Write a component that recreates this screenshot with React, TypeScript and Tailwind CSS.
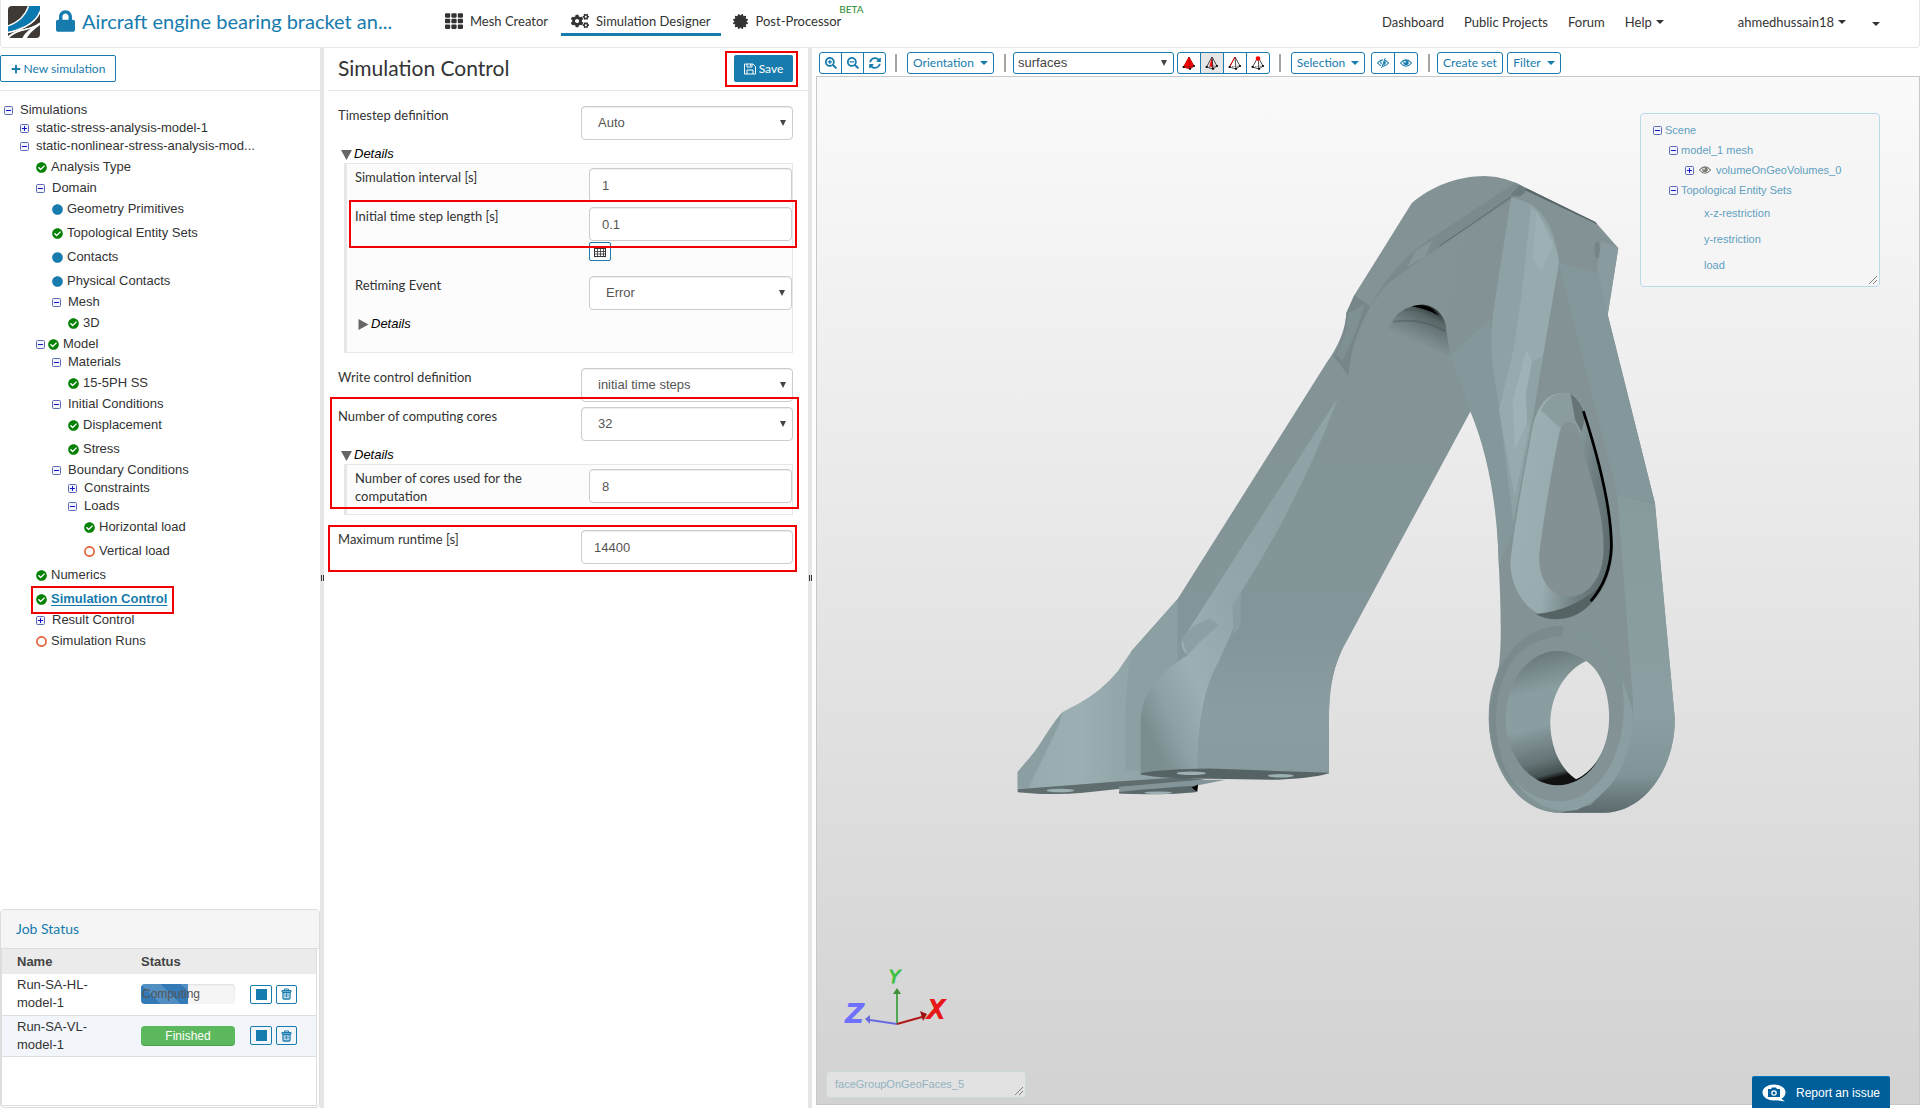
import { useState } from 'react';
import type { ReactNode } from 'react';
import { FaLock, FaTh, FaCogs, FaCertificate, FaPlus, FaSearchPlus, FaSearchMinus, FaSyncAlt, FaCheckCircle, FaCircle } from 'react-icons/fa';
import { clsx } from 'clsx';

type Status = 'done' | 'info' | 'todo';

interface TreeItem {
  label: string;
  level: number;
  toggle?: 'open' | 'closed';
  status?: Status;
  active?: boolean;
}

const treeItems: TreeItem[] = [
  { label: 'Simulations', level: 0, toggle: 'open' },
  { label: 'static-stress-analysis-model-1', level: 1, toggle: 'closed' },
  { label: 'static-nonlinear-stress-analysis-mod...', level: 1, toggle: 'open' },
  { label: 'Analysis Type', level: 2, status: 'done' },
  { label: 'Domain', level: 2, toggle: 'open' },
  { label: 'Geometry Primitives', level: 3, status: 'info' },
  { label: 'Topological Entity Sets', level: 3, status: 'done' },
  { label: 'Contacts', level: 3, status: 'info' },
  { label: 'Physical Contacts', level: 3, status: 'info' },
  { label: 'Mesh', level: 3, toggle: 'open' },
  { label: '3D', level: 4, status: 'done' },
  { label: 'Model', level: 2, toggle: 'open', status: 'done' },
  { label: 'Materials', level: 3, toggle: 'open' },
  { label: '15-5PH SS', level: 4, status: 'done' },
  { label: 'Initial Conditions', level: 3, toggle: 'open' },
  { label: 'Displacement', level: 4, status: 'done' },
  { label: 'Stress', level: 4, status: 'done' },
  { label: 'Boundary Conditions', level: 3, toggle: 'open' },
  { label: 'Constraints', level: 4, toggle: 'closed' },
  { label: 'Loads', level: 4, toggle: 'open' },
  { label: 'Horizontal load', level: 5, status: 'done' },
  { label: 'Vertical load', level: 5, status: 'todo' },
  { label: 'Numerics', level: 2, status: 'done' },
  { label: 'Simulation Control', level: 2, status: 'done', active: true },
  { label: 'Result Control', level: 2, toggle: 'closed' },
  { label: 'Simulation Runs', level: 2, status: 'todo' },
];

const indents = ['pl-1', 'pl-5', 'pl-9', 'pl-[52px]', 'pl-[68px]', 'pl-[84px]'];

/* ---------- small icons ---------- */

function Caret({ className }: { className?: string }) {
  return (
    <svg viewBox="0 0 8 4" className={clsx('inline-block h-1 w-2 shrink-0', className)} fill="currentColor">
      <path d="M0 0h8L4 4z" />
    </svg>
  );
}

function ToggleIcon({ open }: { open: boolean }) {
  return (
    <svg viewBox="0 0 9 9" className="block h-[9px] w-[9px] shrink-0">
      <rect x="0.5" y="0.5" width="8" height="8" rx="1" fill="#f2f3fb" stroke="#5c6bb5" />
      <path d={open ? 'M2 4.5h5' : 'M2 4.5h5M4.5 2v5'} stroke="#1414c8" />
    </svg>
  );
}

function StatusIcon({ status }: { status: Status }) {
  if (status === 'done') return <FaCheckCircle className="h-[11px] w-[11px] shrink-0 text-[#058205]" />;
  if (status === 'info') return <FaCircle className="h-[11px] w-[11px] shrink-0 text-[#177bae]" />;
  return (
    <svg viewBox="0 0 11 11" className="h-[11px] w-[11px] shrink-0">
      <circle cx="5.5" cy="5.5" r="4.6" fill="none" stroke="#e2592b" strokeWidth="1.6" />
    </svg>
  );
}

function Logo() {
  return (
    <svg viewBox="0 0 32 32" className="h-8 w-8 shrink-0">
      <path d="M4 0h25Q28 7 16 15Q6 20 0 22V4Q0 0 4 0z" fill="#3e3935" />
      <path d="M20 0h12v4Q29 14 17 20Q8 24 0 26V20Q16 14 20 0z" fill="#0b78b0" />
      <path d="M32 7v10Q26 21 16 23Q6 25 0 30V27Q8 25 17 21Q28 16 32 7z" fill="#3e3935" />
      <path d="M32 19v9q0 4-4 4h-9Q22 26 32 19zM28 20Q18 26 15 32H4q-3 0-3-1Q8 26 16 24Q22 23 28 20z" fill="#3e3935" />
      <path d="M0 20Q16 14 20.500 0M0 26.500Q10 25 18 20.500Q29 14 32 6M1 31Q8 25 17 23.500Q26 21.500 32 17M15 32Q19 24 32 18" fill="none" stroke="#fff" strokeWidth="1.300" />
    </svg>
  );
}

function SaveIcon() {
  return (
    <svg viewBox="0 0 12 12" className="h-3 w-3 shrink-0" fill="none" stroke="currentColor">
      <path d="M1.500 1h7.500l2.500 2.500v7.500h-11v-10z" />
      <path d="M3 1v3h5V1M3 11V7h6v4" />
      <path d="M6.500 1v2" />
    </svg>
  );
}

function TableIcon() {
  return (
    <svg viewBox="0 0 12 10" className="h-[10px] w-3" fill="none" stroke="#333">
      <rect x="0.500" y="0.500" width="11" height="9" />
      <path d="M0 1h12" strokeWidth="2" />
      <path d="M3.500 1v9M6.500 1v9M9.500 1v9M1 4.500h10M1 7h10" strokeWidth="0.800" />
    </svg>
  );
}

function TrashIcon() {
  return (
    <svg viewBox="0 0 11 12" className="h-3 w-[11px]">
      <path d="M1 2.500h9v1.500H1zM3.500 2.500V1h4v1.500" fill="none" stroke="#177bae" />
      <path d="M2 4.500h7V10q0 1-1 1H3q-1 0-1-1z" fill="none" stroke="#177bae" strokeWidth="1.300" />
      <path d="M4 5.500v4M5.500 5.500v4M7 5.500v4" stroke="#177bae" strokeWidth="0.900" />
    </svg>
  );
}

function EyeIcon({ off, className }: { off?: boolean; className?: string }) {
  return (
    <svg viewBox="0 0 12 10" className={clsx('h-[10px] w-3 shrink-0', className)}>
      <path d="M0.500 5Q6-1.500 11.500 5Q6 11.500 0.500 5z" fill="none" stroke="currentColor" strokeWidth="1.100" />
      <circle cx="6" cy="4.600" r="2.700" fill="currentColor" />
      <circle cx="5" cy="3.800" r="0.900" fill="#fff" />
      {off && <path d="M7.600 0L4 10" stroke="#fff" strokeWidth="2" />}
      {off && <path d="M8.200 0L4.600 10" stroke="currentColor" strokeWidth="1" />}
    </svg>
  );
}

// Tetrahedron with the picked entity kind painted red
function PickIcon({ kind }: { kind: 'volume' | 'face' | 'edge' | 'node' }) {
  return (
    <svg viewBox="0 0 14 14" className="h-[14px] w-[14px]">
      {kind === 'volume' && <path d="M7 1L1.500 11 8 13l4-3z" fill="#f00" />}
      {kind === 'face' && <path d="M7 1L4.500 9.500 8.500 12.500z" fill="#f00" />}
      <path
        d="M7 1L1.500 11 8 13l4-3zM7 1l1 12"
        fill="none"
        stroke={kind === 'volume' ? '#b00' : '#333'}
        strokeWidth="0.900"
      />
      <path d="M1.500 11L12 10" stroke="#333" strokeWidth="0.700" strokeDasharray="1.500 1" />
      {kind === 'edge' && <path d="M7 1L1.500 11" stroke="#f00" strokeWidth="1" />}
      {kind === 'node' && <circle cx="7" cy="2.500" r="2.300" fill="#f00" />}
      <circle cx="1.600" cy="11" r="1.100" />
      <circle cx="8" cy="12.800" r="1.100" />
      <circle cx="12" cy="10" r="1.100" />
    </svg>
  );
}

function Grip() {
  return (
    <svg viewBox="0 0 8 8" className="absolute right-0.5 bottom-0.5 h-2 w-2">
      <path d="M0 8L8 0M4 8l4-4" stroke="#777" strokeWidth="0.900" />
    </svg>
  );
}

// Red frame drawn over the thing that it marks
function Marker({ className }: { className: string }) {
  return <span className={clsx('pointer-events-none absolute z-10 border-2 border-[#f00000]', className)} />;
}

function Splitter() {
  return (
    <div className="flex w-1 shrink-0 items-center justify-center gap-px bg-[#e5e5e5]">
      <span className="h-1.5 w-px bg-[#333]" />
      <span className="h-1.5 w-px bg-[#333]" />
    </div>
  );
}

/* ---------- header ---------- */

function Header() {
  return (
    <header className="flex h-12 shrink-0 items-start rounded-b border-x border-b border-[#e7e7e7] bg-white text-[13px] leading-5 text-[#333]">
      <a href="#" className="mt-1.5 ml-[7px]" aria-label="Home">
        <Logo />
      </a>
      <div className="flex w-[405px] items-center pt-1.5 pl-4 text-[#177bae]">
        <FaLock className="h-[22px] w-[19px]" />
        <h1 className="ml-[7px] text-[20px] leading-[30px]">Aircraft engine bearing bracket an...</h1>
      </div>
      <nav className="flex h-9">
        <a href="#" className="flex items-center pt-1.5 pr-[13px]">
          <FaTh className="mr-[7px] h-[18px] w-[18px]" />
          Mesh Creator
        </a>
        <a href="#" className="flex items-center border-b-[3px] border-[#177bae] px-2.5 pt-[9px]">
          <FaCogs className="mr-[7px] h-[18px] w-[18px]" />
          Simulation Designer
        </a>
        <a href="#" className="flex items-center pt-1.5 pl-3">
          <FaCertificate className="mr-2 h-[15px] w-[15px]" />
          Post-Processor
        </a>
        <sup className="top-0 -ml-0.5 pt-[3px] text-[10px] leading-3 text-[#1f8a2c]">BETA</sup>
      </nav>
      <nav className="ml-auto flex pt-3 pr-[39px]">
        <a href="#" className="mr-5">Dashboard</a>
        <a href="#" className="mr-5">Public Projects</a>
        <a href="#" className="mr-5">Forum</a>
        <button className="mr-[74px] flex items-center gap-1">
          Help <Caret />
        </button>
        <button className="mr-[26px] flex items-center gap-1">
          ahmedhussain18 <Caret />
        </button>
        <button aria-label="More">
          <Caret />
        </button>
      </nav>
    </header>
  );
}

/* ---------- left column ---------- */

function TreeRow({ item }: { item: TreeItem }) {
  return (
    <li className={clsx('flex items-center', indents[item.level], item.toggle ? 'h-[18px]' : 'h-6')}>
      <span className="relative flex items-center">
        {item.toggle && <ToggleIcon open={item.toggle === 'open'} />}
        {item.status && (
          <span className={item.toggle ? 'ml-[3px]' : ''}>
            <StatusIcon status={item.status} />
          </span>
        )}
        <a
          href="#"
          className={clsx(
            item.status ? 'pl-1' : 'pl-[7px]',
            item.active ? 'font-bold text-[#177bae] underline underline-offset-2' : 'text-[#333]',
          )}
        >
          {item.label}
        </a>
        {item.active && <Marker className="-top-[3px] -right-[7px] -bottom-[5px] -left-[5px]" />}
      </span>
    </li>
  );
}

function JobButtons({ name }: { name: string }) {
  return (
    <div className="flex gap-1">
      <button aria-label={`Stop ${name}`} className="flex h-[19px] w-[22px] items-center justify-center rounded-xs border border-[#177bae]">
        <span className="h-[11px] w-[11px] bg-[#177bae]" />
      </button>
      <button aria-label={`Delete ${name}`} className="flex h-[19px] w-[21px] items-center justify-center rounded-xs border border-[#177bae]">
        <TrashIcon />
      </button>
    </div>
  );
}

function JobStatus() {
  return (
    <section className="h-[199px] shrink-0 overflow-hidden rounded border border-[#ddd] bg-white">
      <h2 className="flex h-[39px] items-center border-b border-[#ddd] bg-[#f5f5f5] pb-0.5 pl-[15px] font-[Lato,sans-serif] text-[14px] text-[#177bae]">
        Job Status
      </h2>
      <div className="mr-0.5 h-[157px] border-x border-b border-[#ddd]">
        <table className="w-full table-fixed text-left leading-[18px]">
          <thead>
            <tr className="h-[25px] bg-[#ebebeb] text-[#444]">
              <th className="w-[139px] pl-[15px]">Name</th>
              <th className="w-[109px]">Status</th>
              <th aria-label="Actions" />
            </tr>
          </thead>
          <tbody className="text-[#333]">
            <tr className="h-[41px] border-b border-[#ddd]">
              <td className="pr-12 pl-[15px]">Run-SA-HL-model-1</td>
              <td>
                <div className="h-5 w-[94px] overflow-hidden rounded bg-[#f5f5f5] shadow-[inset_0_1px_2px_rgba(0,0,0,0.1)]">
                  <div className="h-5 w-[47px] bg-[#337ab7] bg-[linear-gradient(45deg,rgba(255,255,255,.15)_25%,transparent_25%,transparent_50%,rgba(255,255,255,.15)_50%,rgba(255,255,255,.15)_75%,transparent_75%)] bg-[length:40px_40px] pl-px text-[12px] leading-5 whitespace-nowrap text-[#555]">
                    Computing
                  </div>
                </div>
              </td>
              <td>
                <JobButtons name="Run-SA-HL-model-1" />
              </td>
            </tr>
            <tr className="h-[41px] border-b border-[#ddd] bg-[#f2f6fb]">
              <td className="pr-12 pl-[15px]">Run-SA-VL-model-1</td>
              <td>
                <div className="h-5 w-[94px] rounded bg-[#5cb85c] text-center text-[12px] leading-5 text-white shadow-[inset_0_-1px_0_rgba(0,0,0,0.15)]">
                  Finished
                </div>
              </td>
              <td>
                <JobButtons name="Run-SA-VL-model-1" />
              </td>
            </tr>
          </tbody>
        </table>
      </div>
    </section>
  );
}

function Sidebar() {
  return (
    <aside className="flex w-80 shrink-0 flex-col font-['Liberation_Sans',Arial,sans-serif] text-[13px]">
      <div className="h-[43px] shrink-0 border-b border-[#e7e7e7] pt-[7px]">
        <button className="flex h-[27px] w-[116px] items-center justify-center gap-[3px] rounded-xs border border-[#177bae] font-[Lato,sans-serif] text-[12px] text-[#177bae]">
          <FaPlus className="h-[10px] w-[10px]" />
          New simulation
        </button>
      </div>
      <ul className="min-h-0 flex-1 overflow-hidden pt-[10px]">
        {treeItems.map((item) => (
          <TreeRow key={item.label} item={item} />
        ))}
      </ul>
      <JobStatus />
    </aside>
  );
}

/* ---------- settings form ---------- */

interface FieldProps {
  id: string;
  label: string;
  value: string;
  kind?: 'text' | 'select';
  nested?: boolean;
}

function Field({ id, label, value, kind = 'text', nested }: FieldProps) {
  const control = 'h-[34px] w-full rounded border border-[#ccc] bg-white text-[13px] text-[#555] shadow-[inset_0_1px_1px_rgba(0,0,0,0.075)]';
  return (
    <div className="flex items-start justify-between">
      <label htmlFor={id} className="flex-1 pr-14 leading-[18px]">
        {label}
      </label>
      <div className={clsx("relative shrink-0 font-['Liberation_Sans',Arial,sans-serif]", nested ? 'w-[203px]' : 'w-[212px]')}>
        {kind === 'select' ? (
          <>
            <select id={id} defaultValue={value} className={clsx(control, 'appearance-none px-4')}>
              <option>{value}</option>
            </select>
            <svg viewBox="0 0 6 6" className="pointer-events-none absolute top-[14px] right-[7px] h-1.5 w-1.5" fill="#444">
              <path d="M0 0h6L3 6z" />
            </svg>
          </>
        ) : (
          <input id={id} type="text" defaultValue={value} className={clsx(control, 'px-3')} />
        )}
      </div>
    </div>
  );
}

function Details({ children, initial = true }: { children?: ReactNode; initial?: boolean }) {
  const [open, setOpen] = useState(initial);
  return (
    <div>
      <button
        type="button"
        aria-expanded={open}
        onClick={() => setOpen(!open)}
        className="flex h-[18px] items-center gap-0.5 pl-[3px] font-['Liberation_Sans',Arial,sans-serif] text-[13px] text-black italic"
      >
        <svg viewBox="0 0 11 11" className="h-[11px] w-[11px]" fill="#666">
          <path d={open ? 'M0 1h11L5.500 11z' : 'M0.500 0v11L10.500 5.500z'} />
        </svg>
        Details
      </button>
      {open && (
        <div className="ml-1.5 border border-l-[3px] border-[#e7e7e7] bg-[#fcfcfc] pt-1 pl-2">
          {children}
        </div>
      )}
    </div>
  );
}

function SettingsPanel() {
  return (
    <main className="w-[484px] shrink-0 overflow-hidden pl-1 text-[13px] text-[#333]">
      <div className="flex h-[43px] items-start justify-between border-b border-[#e7e7e7] pt-[7px] pr-[15px] pl-2.5">
        <h2 className="text-[21px] leading-[26px]">Simulation Control</h2>
        <div className="relative">
          <button className="flex h-[27px] w-[59px] items-center justify-center gap-[3px] rounded-xs bg-[#177bae] text-[12px] text-white">
            <SaveIcon />
            Save
          </button>
          <Marker className="-top-1 -right-[5px] -bottom-[5px] -left-[9px]" />
        </div>
      </div>
      <form className="flex flex-col gap-[5px] pt-[15px] pr-[15px] pl-2.5">
        <Field id="timestep" label="Timestep definition" value="Auto" kind="select" />
        <Details>
          <Field id="interval" label="Simulation interval [s]" value="1" nested />
          <div className="relative pt-[5px]">
            <Field id="step-length" label="Initial time step length [s]" value="0.1" nested />
            <Marker className="-top-0.5 -right-[5px] -bottom-[7px] -left-1.5" />
          </div>
          <div className="flex w-full justify-end pt-px pb-[15px]">
            <div className="w-[203px]">
              <button type="button" aria-label="Edit as table" className="flex h-[19px] w-[22px] items-center justify-center rounded-xs border border-[#177bae]">
                <TableIcon />
              </button>
            </div>
          </div>
          <Field id="retiming" label="Retiming Event" value="Error" kind="select" nested />
          <div className="pt-[5px] pb-[19px]">
            <Details initial={false} />
          </div>
        </Details>
        <div className="pt-[10px]">
          <Field id="write-control" label="Write control definition" value="initial time steps" kind="select" />
        </div>
        <div className="relative flex flex-col gap-[5px]">
          <Field id="cores" label="Number of computing cores" value="32" kind="select" />
          <Details>
            <div className="pb-[9px]">
              <Field id="used-cores" label="Number of cores used for the computation" value="8" nested />
            </div>
          </Details>
          <Marker className="-top-[10px] -right-1.5 bottom-1.5 -left-2" />
        </div>
        <div className="relative mt-[10px]">
          <Field id="runtime" label="Maximum runtime [s]" value="14400" />
          <Marker className="-top-[5px] -right-1 -bottom-2 -left-2.5" />
        </div>
      </form>
    </main>
  );
}

/* ---------- viewer ---------- */

const toolButton = 'flex h-[22px] items-center justify-center rounded-[3px] border border-[#177bae] bg-white text-[12px] text-[#177bae]';

function Divider({ className }: { className: string }) {
  return <span className={clsx('h-[18px] w-0.5 bg-[#aaa5a0]', className)} />;
}

function Toolbar() {
  return (
    <div className="flex h-7 shrink-0 items-center pt-0.5 pl-[3px]">
      <div className="flex -space-x-px">
        <button aria-label="Zoom in" className={clsx(toolButton, 'w-[23px] rounded-r-none')}>
          <FaSearchPlus className="h-3 w-3" />
        </button>
        <button aria-label="Zoom out" className={clsx(toolButton, 'w-[23px] rounded-none')}>
          <FaSearchMinus className="h-3 w-3" />
        </button>
        <button aria-label="Reset view" className={clsx(toolButton, 'w-[23px] rounded-l-none')}>
          <FaSyncAlt className="h-3 w-3" />
        </button>
      </div>
      <Divider className="mr-[10px] ml-[9px]" />
      <button className={clsx(toolButton, 'w-[87px] gap-1.5')}>
        Orientation <Caret />
      </button>
      <Divider className="mr-[7px] ml-[10px]" />
      <div className="relative mr-[3px] w-[161px]">
        <select
          aria-label="Render mode"
          defaultValue="surfaces"
          className="block h-[22px] w-full appearance-none rounded-[3px] border border-[#177bae] bg-white px-1 font-['Liberation_Sans',Arial,sans-serif] text-[13px] text-[#444]"
        >
          <option>surfaces</option>
        </select>
        <svg viewBox="0 0 6 6" className="pointer-events-none absolute top-2 right-[7px] h-1.5 w-1.5" fill="#444">
          <path d="M0 0h6L3 6z" />
        </svg>
      </div>
      <div className="flex -space-x-px">
        <button aria-label="Pick volumes" className={clsx(toolButton, 'w-6 rounded-r-none')}>
          <PickIcon kind="volume" />
        </button>
        <button aria-label="Pick faces" className={clsx(toolButton, 'w-6 rounded-none !bg-[#e6e6e6]')}>
          <PickIcon kind="face" />
        </button>
        <button aria-label="Pick edges" className={clsx(toolButton, 'w-6 rounded-none')}>
          <PickIcon kind="edge" />
        </button>
        <button aria-label="Pick nodes" className={clsx(toolButton, 'w-6 rounded-l-none')}>
          <PickIcon kind="node" />
        </button>
      </div>
      <Divider className="mr-[10px] ml-[9px]" />
      <button className={clsx(toolButton, 'mr-1.5 w-[74px] gap-1.5')}>
        Selection <Caret />
      </button>
      <div className="flex -space-x-px">
        <button aria-label="Hide selection" className={clsx(toolButton, 'w-6 rounded-r-none')}>
          <EyeIcon off />
        </button>
        <button aria-label="Show all" className={clsx(toolButton, 'w-6 rounded-l-none')}>
          <EyeIcon />
        </button>
      </div>
      <Divider className="mr-[7px] ml-[10px]" />
      <button className={clsx(toolButton, 'mr-1 w-[66px]')}>Create set</button>
      <button className={clsx(toolButton, 'w-[54px] gap-1.5')}>
        Filter <Caret />
      </button>
    </div>
  );
}

function Bracket() {
  return (
    <g transform="translate(163 73) scale(0.4592 0.4337)">
      <defs>
        <mask id="bore">
          <rect width="1568" height="1568" fill="#fff" />
          <path d="M1320 1178C1356 1205 1370 1255 1370 1310C1370 1375 1340 1430 1298 1451C1262 1425 1241 1375 1242 1315C1244 1255 1275 1200 1320 1178z" fill="#000" />
        </mask>
        <linearGradient id="foot" gradientUnits="userSpaceOnUse" x1="350" x2="780" y1="1300" y2="1120">
          <stop offset="0" stopColor="#7c8d90" />
          <stop offset="0.120" stopColor="#8da0a3" />
          <stop offset="0.300" stopColor="#9cb0b3" />
          <stop offset="0.600" stopColor="#93a7aa" />
          <stop offset="1" stopColor="#8fa3a6" />
        </linearGradient>
        <linearGradient id="backFoot" x1="0" x2="1" y1="0" y2="0">
          <stop offset="0" stopColor="#96aaad" />
          <stop offset="0.300" stopColor="#9cb0b4" />
          <stop offset="0.500" stopColor="#93a6a9" />
          <stop offset="1" stopColor="#8a9c9f" />
        </linearGradient>
        <linearGradient id="arm" x1="0" x2="0" y1="0" y2="1">
          <stop offset="0" stopColor="#839295" />
          <stop offset="0.740" stopColor="#839598" />
          <stop offset="1" stopColor="#8b9ea1" />
        </linearGradient>
        <linearGradient id="frontFoot" x1="0" x2="0" y1="0" y2="1">
          <stop offset="0" stopColor="#839598" />
          <stop offset="0.250" stopColor="#87999c" />
          <stop offset="0.600" stopColor="#8b9da0" />
          <stop offset="1" stopColor="#879a9d" />
        </linearGradient>
        <linearGradient id="boreWall" x1="0" x2="0.200" y1="0" y2="1">
          <stop offset="0" stopColor="#465254" />
          <stop offset="0.100" stopColor="#6c7c7e" />
          <stop offset="0.350" stopColor="#8a9da0" />
          <stop offset="0.600" stopColor="#8a9da0" />
          <stop offset="0.850" stopColor="#667577" />
          <stop offset="0.960" stopColor="#465254" />
          <stop offset="1" stopColor="#111" />
        </linearGradient>
        <linearGradient id="side" x1="0" x2="0" y1="0" y2="1">
          <stop offset="0" stopColor="#879a9c" />
          <stop offset="0.700" stopColor="#8b9ea1" />
          <stop offset="0.880" stopColor="#819497" />
          <stop offset="1" stopColor="#5c6a6c" />
        </linearGradient>
        <linearGradient id="archWall" gradientUnits="userSpaceOnUse" x1="985" x2="935" y1="356" y2="460">
          <stop offset="0" stopColor="#1b2021" />
          <stop offset="0.250" stopColor="#586567" />
          <stop offset="0.550" stopColor="#718083" />
          <stop offset="0.850" stopColor="#849598" />
          <stop offset="1" stopColor="#849598" />
        </linearGradient>
        <linearGradient id="pocket" x1="0" x2="1" y1="0.300" y2="0.600">
          <stop offset="0" stopColor="#9db1b5" />
          <stop offset="0.450" stopColor="#98abae" />
          <stop offset="0.750" stopColor="#708082" />
          <stop offset="1" stopColor="#5d6b6d" />
        </linearGradient>
      </defs>

      {/* rear foot */}
      <path d="M82 1434L98 1414C130 1380 150 1330 180 1296L215 1276Q262 1250 300 1202L330 1155L430 1036L520 1100V1440L300 1472L82 1478z" fill="url(#backFoot)" />
      <path d="M82 1434L98 1414C130 1380 150 1330 180 1296L172 1325L105 1472H82z" fill="#8b9ea1" />
      <path d="M330 1155L430 1036V1200L350 1300V1430H318Q312 1250 330 1155z" fill="#8c9fa2" />
      <path d="M82 1474L300 1456L440 1446L490 1452L240 1480Q190 1486 130 1485L82 1481z" fill="#5f6d6f" />
      <path d="M303 1468L480 1452H535L470 1466V1481Q400 1488 303 1483z" fill="#839598" />
      <path d="M303 1480Q400 1470 470 1466V1480Q400 1488 303 1484z" fill="#5a686a" />
      <path d="M461 1470L475 1463L473 1480z" fill="#000" />

      {/* left arm */}
      <path d="M430 1036L755 490Q795 430 798 375L815 335L940 123C980 85 1040 60 1100 60Q1150 62 1190 88L1340 166L1240 640L1068 603L800 1130C768 1190 760 1240 760 1310V1438H350V1310C358 1250 400 1205 430 1180z" fill="url(#arm)" />
      <path d="M815 335L798 375Q796 430 770 475L802 520Q808 440 850 360Z" fill="#778789" />
      <path d="M802 375Q798 430 775 472L790 485Q818 430 838 355z" fill="#7f9092" />
      <path d="M1165 76L980 205Q900 260 850 360L872 328Q890 300 1000 225L1160 112L1190 88z" fill="#7b8a8d" />
      <path d="M1157 108L1000 222" stroke="#5a6769" strokeWidth="2" />
      <path d="M985 208L970 246L930 270L950 232z" fill="#86979a" />
      <path d="M440 1130L780 570Q700 800 568 1020C560 1100 540 1130 520 1180Q475 1260 473 1427L350 1437V1310C356 1240 400 1200 452 1165Q436 1150 440 1130z" fill="url(#foot)" />
      <path d="M568 1020L568 1095L552 1120L550 1050z" fill="#8a9da0" />
      <path d="M440 1130L452 1165Q480 1130 520 1095L500 1080Q450 1100 440 1130z" fill="#8c9fa2" />
      <path d="M556 1115Q640 1140 785 1160Q760 1220 760 1310V1436L473 1427Q475 1260 520 1180z" fill="url(#frontFoot)" />
      <path d="M350 1437Q400 1427 500 1426L760 1436Q740 1447 650 1452L500 1450Q400 1450 350 1440z" fill="#556365" />
      <g fill="#9db1b4">
        <ellipse cx="460" cy="1437" rx="32" ry="4" />
        <ellipse cx="655" cy="1443" rx="28" ry="4" />
        <ellipse cx="175" cy="1477" rx="30" ry="4" />
        <ellipse cx="388" cy="1482" rx="30" ry="3" />
      </g>

      {/* arch */}
      <path d="M884 422Q905 360 962 356C995 358 1010 385 1014 402L1024 475z" fill="url(#archWall)" />
      <path d="M940 361Q962 352 985 366L1000 382Q965 363 940 361z" fill="#000" />
      <path d="M925 368Q970 366 1008 392M900 396Q960 385 1014 418" fill="none" stroke="#4c585a" strokeOpacity="0.5" strokeWidth="4" />

      {/* right leg */}
      <g mask="url(#bore)">
        <path d="M1190 88L1340 166L1390 226L1367 380L1470 815L1513 1310C1515 1420 1450 1527 1360 1528H1262C1170 1528 1108 1420 1108 1310C1108 1250 1120 1230 1130 1190C1138 1130 1132 1000 1130 960C1125 800 1115 700 1068 603L1024 475L1014 402L1060 200z" fill="#839295" />
        <path d="M1388 795L1470 818L1513 1310C1515 1420 1450 1527 1360 1528H1262C1370 1500 1422 1400 1422 1270z" fill="url(#side)" />
        <path d="M1260 260L1345 285L1367 380L1470 815L1388 795z" fill="#84979a" />
        <path d="M1352 210L1390 226L1367 380L1343 275z" fill="#899b9e" />
        <path d="M1190 88L1340 166L1345 172L1186 92z" fill="#5a686a" />
        <ellipse cx="1344" cy="230" rx="6" ry="20" fill="#75858a" />
        <path d="M1155 104Q1180 115 1190 90L1175 80z" fill="#6c7b7e" />
        <path d="M1024 475L1110 390L1130 575L1165 870L1130 960Q1125 750 1068 603z" fill="#84979a" />
        <path d="M1157 108L1200 125Q1250 160 1261 258L1225 480L1205 610L1162 860L1128 575Q1105 450 1118 370z" fill="#8ea1a4" />
        <path d="M1200 130Q1245 175 1261 258L1225 480L1200 620L1165 800L1130 600L1162 460L1180 330z" fill="#97abae" />
        <path d="M1190 460L1202 490L1188 560L1192 630L1165 690L1160 580z" fill="#9fb2b5" />
        <path d="M1202 490L1225 475L1205 610L1192 640L1190 560z" fill="#8fa2a5" />
        <path d="M1212 140L1248 220L1222 280L1204 250z" fill="#9db1b4" />

        {/* pocket */}
        <path d="M1270 560C1300 560 1315 590 1318 610C1340 700 1378 830 1378 915C1378 1010 1320 1082 1255 1082C1190 1075 1155 1010 1155 950C1165 850 1190 720 1203 640Q1220 560 1270 560z" fill="url(#pocket)" />
        <path d="M1270 560C1300 560 1315 590 1318 610L1310 650L1262 640L1222 600Q1240 562 1270 560z" fill="#8b9c9f" />
        <path d="M1286 562Q1312 580 1318 615L1310 650L1296 622z" fill="#667476" />
        <path d="M1210 1070Q1300 1060 1355 1000Q1325 1080 1255 1082Q1230 1082 1210 1070z" fill="#566365" />
        <path d="M1314 602C1350 720 1375 830 1375 915Q1372 990 1330 1040" fill="none" stroke="#000" strokeWidth="6" />
        <path d="M1282 628C1300 630 1303 640 1310 680C1330 760 1358 830 1358 920C1358 990 1320 1032 1280 1030C1240 1025 1215 990 1218 930C1230 830 1245 740 1262 650Q1268 628 1282 628z" fill="#839194" />

        {/* eye */}
        <path d="M1135 1190Q1180 1095 1280 1095Q1400 1110 1421 1280Q1425 1420 1330 1510L1262 1528C1170 1528 1108 1420 1108 1310Q1108 1250 1135 1190z" fill="#829396" />
        <path d="M1110 1330Q1108 1250 1135 1190Q1180 1100 1270 1096L1268 1122Q1125 1130 1124 1320Q1130 1450 1200 1500Q1118 1440 1110 1330z" fill="#7b8b8d" />
        <path d="M1398 1220Q1420 1400 1320 1480Q1230 1530 1165 1455Q1220 1535 1300 1522Q1425 1460 1421 1290z" fill="#8b9ea1" />
        <ellipse cx="1260" cy="1312" rx="136" ry="190" fill="#839295" />
        <ellipse cx="1258" cy="1310" rx="113" ry="155" fill="url(#boreWall)" />
        <path d="M1371 1310Q1370 1210 1320 1178L1298 1451Q1370 1410 1371 1310z" fill="#839295" />
      </g>
    </g>
  );
}

function AxisTriad() {
  return (
    <g fontFamily="DejaVu Sans, sans-serif" fontStyle="italic">
      <path d="M80 947V915" stroke="#4fa84f" strokeWidth="2" />
      <path d="M76 917L80 911L84 917z" fill="#3e8f3e" />
      <path d="M80 947L53 943" stroke="#6a6ae0" strokeWidth="2" />
      <path d="M48 942L53 938V947z" fill="#6a6ae0" />
      <path d="M80 947L105 940" stroke="#b01818" strokeWidth="2" />
      <path d="M110 937L103 934L106 944z" fill="#a01010" />
      <text x="72" y="906" fontSize="18" fill="#3fbf3f" stroke="#3fbf3f">Y</text>
      <text x="29" y="945" fontSize="25" fill="#7070ff" stroke="#7070ff" strokeWidth="2">Z</text>
      <text x="111" y="941" fontSize="24" fill="#e81818" stroke="#e81818" strokeWidth="2">X</text>
    </g>
  );
}

function SceneTree() {
  return (
    <div className="absolute top-9 right-[39px] h-[174px] w-60 rounded border border-[#b9dbe8] bg-[#f5f5f5]/90 pt-1.5 pl-3 text-[11px] text-[#5f9fc0]">
      <ul>
        <li className="flex h-5 items-center gap-[3px]">
          <ToggleIcon open /> <a href="#">Scene</a>
        </li>
        <li className="flex h-5 items-center gap-[3px] pl-4">
          <ToggleIcon open /> <a href="#">model_1 mesh</a>
        </li>
        <li className="flex h-5 items-center pl-8">
          <ToggleIcon open={false} />
          <EyeIcon className="mx-[5px] text-[#777770]" />
          <a href="#">volumeOnGeoVolumes_0</a>
        </li>
        <li className="flex h-5 items-center gap-[3px] pl-4">
          <ToggleIcon open /> <a href="#">Topological Entity Sets</a>
        </li>
        <li className="flex h-[26px] items-center pl-[51px]">
          <a href="#">x-z-restriction</a>
        </li>
        <li className="flex h-[26px] items-center pl-[51px]">
          <a href="#">y-restriction</a>
        </li>
        <li className="flex h-[26px] items-center pl-[51px]">
          <a href="#">load</a>
        </li>
      </ul>
      <Grip />
    </div>
  );
}

function Viewer() {
  return (
    <section className="flex min-w-0 flex-1 flex-col pb-[3px] pl-1">
      <Toolbar />
      <div className="relative min-h-0 flex-1 border border-[#c8c8c8] bg-linear-to-b from-[#fafafa] to-[#d2d2d2] font-['Liberation_Sans',Arial,sans-serif]">
        <svg viewBox="0 0 1102 1027" className="absolute inset-0 h-full w-full">
          <Bracket />
          <AxisTriad />
        </svg>
        <SceneTree />
        <div className="absolute bottom-1.5 left-[9px] flex h-[27px] w-[200px] items-center rounded border border-[#ccdade] bg-[#e2e2e2] pl-2 text-[11px] text-[#93b3c1]">
          faceGroupOnGeoFaces_5
          <Grip />
        </div>
      </div>
    </section>
  );
}

export default function App() {
  return (
    <div className="flex h-screen flex-col overflow-hidden bg-white font-[Lato,sans-serif]">
      <Header />
      <div className="flex min-h-0 flex-1">
        <Sidebar />
        <Splitter />
        <SettingsPanel />
        <Splitter />
        <Viewer />
      </div>
      <button className="fixed right-[30px] bottom-0 flex h-8 w-[138px] items-center gap-[10px] rounded-t-xs border-t border-[#0b76bd] bg-[#005f9b] pl-2.5 font-['Liberation_Sans',Arial,sans-serif] text-[12px] text-white">
        <svg viewBox="0 0 24 18" className="h-[18px] w-6">
          <ellipse cx="12" cy="8.500" rx="11.500" ry="8" fill="#fff" />
          <path d="M17 13l6 4.500L13 16z" fill="#fff" />
          <path d="M6 5h3l1-1.500h4L15 5h3v8H6z" fill="#005f9b" />
          <circle cx="12" cy="9" r="2.800" fill="#fff" />
          <circle cx="12" cy="9" r="1.500" fill="#005f9b" />
        </svg>
        Report an issue
      </button>
    </div>
  );
}
